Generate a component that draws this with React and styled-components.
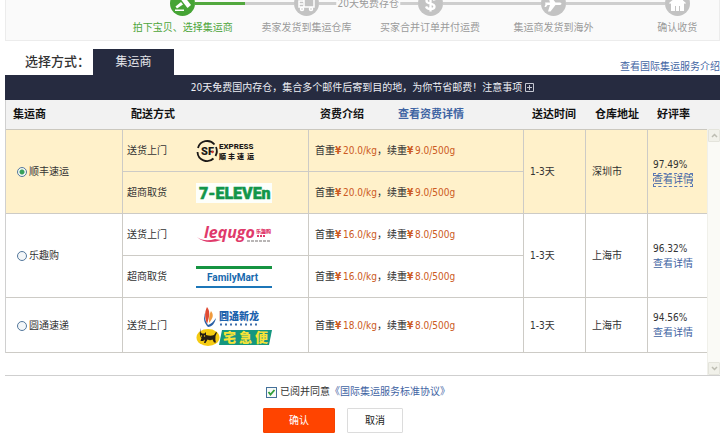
import React, { useState } from "react";
import styled, { createGlobalStyle, css } from "styled-components";

const GlobalStyle = createGlobalStyle`
  * { box-sizing: border-box; }
  body {
    margin: 0;
    background: #fff;
    color: #333;
    font: 10px/14px "DejaVu Sans Condensed", "Open Sans", "Noto Sans CJK SC", sans-serif;
  }
  button, input { font: inherit; margin: 0; }
`;

const Page = styled.main`
  padding-left: 5px;
`;

const StepsPanel = styled.section`
  display: flex;
  flex-direction: column;
  justify-content: flex-end;
  height: 41px;
  overflow: hidden;
  background: #fafafa;
  border: 1px solid #ececec;
  border-top: 0;
`;

const Steps = styled.ol`
  display: grid;
  grid-template-columns: repeat(5, 1fr);
  list-style: none;
  margin: 0 -20px 0 115px;
  padding: 0;
`;

const Step = styled.li`
  position: relative;
  color: ${(p) => (p.$active ? "#4da53a" : "#9b9b9b")};
`;

const StepTrack = styled.div`
  display: flex;
  align-items: center;
`;

const Line = styled.span`
  flex: 1;
  height: 3px;
  background: ${(p) => p.$color};
`;

const StepIcon = styled.svg`
  width: 25px;
  height: 25px;
  flex: none;
`;

const StepLabel = styled.div`
  line-height: 24px;
  text-align: center;
  white-space: nowrap;
`;

const TrackNote = styled.span`
  position: absolute;
  top: 6px;
  left: 100%;
  z-index: 1;
  transform: translateX(-50%);
  padding: 0 1px;
  white-space: nowrap;
  background: #fafafa;
`;

const TabBar = styled.div`
  display: flex;
  align-items: flex-end;
  height: 34px;
  padding-left: 20px;
`;

const TabTitle = styled.h1`
  width: 68px;
  margin: 0;
  font-size: 13px;
  font-weight: 500;
  line-height: 27px;
  white-space: nowrap;
  color: #333;
`;

const Tab = styled.button`
  width: 81px;
  height: 26px;
  padding: 0;
  border: 0;
  font-size: 12px;
  color: #e6e7ec;
  background: #262b40;
`;

const Link = styled.a`
  display: inline-block;
  color: #3f64a3;
  text-decoration: none;
  ${(p) =>
    p.$outlined &&
    css`
      outline: 1px dashed #5b78b4;
      outline-offset: -1px;
    `}
`;

const TabLink = styled(Link)`
  margin-left: auto;
  line-height: 16px;
`;

const Banner = styled.p`
  display: flex;
  align-items: center;
  justify-content: center;
  gap: 3px;
  height: 25px;
  margin: 0;
  color: #eceef4;
  background: #262b40;
`;

const Expand = styled.button`
  display: flex;
  padding: 0;
  border: 0;
  background: none;
`;

const ListPanel = styled.div`
  display: flex;
  border-bottom: 1px solid #cfcfcf;
`;

const TableArea = styled.div`
  flex: 1;
  padding-bottom: 22px;
`;

const Table = styled.table`
  width: 100%;
  table-layout: fixed;
  border-collapse: separate;
  border-spacing: 0;
  border-left: 1px solid #d0d0d0;
`;

const Col = styled.col`
  width: ${(p) => p.$w};
`;

const HeadCell = styled.th`
  height: 30px;
  padding: 0 0 0 ${(p) => p.$indent}px;
  font-size: 11px;
  font-weight: 700;
  text-align: left;
  white-space: nowrap;
  color: #111;
  background: #f2f2f2;
  border-bottom: 1px solid #cbc8bf;
`;

const HeadLink = styled(Link)`
  margin-left: 34px;
`;

const Row = styled.tr`
  background: ${(p) => (p.$selected ? "#fff1ca" : "#fff")};
`;

const Cell = styled.td`
  height: ${(p) => (p.$tall ? 55 : 42)}px;
  padding: 1px 0 0 ${(p) => p.$indent}px;
  border-bottom: 1px solid #cdcbc6;
  border-right: ${(p) => (p.$last ? "0" : "1px solid #cdcbc6")};
  white-space: nowrap;
`;

const Delivery = styled.div`
  display: grid;
  grid-template-columns: 69px auto;
  align-items: center;
`;

const Logo = styled.svg`
  display: block;
  width: 76px;
  height: ${(p) => p.$h}px;
`;

const Carrier = styled.label`
  display: flex;
  align-items: center;
  gap: 2px;
`;

const Radio = styled.input`
  appearance: none;
  width: 10px;
  height: 10px;
  border: 1px solid #54789c;
  border-radius: 50%;
  background: #f3f6f8;
  &:checked {
    background: radial-gradient(circle, #36a05a 0 2px, #f3f8f4 3px);
  }
`;

const Price = styled.span`
  color: #cc5a22;
`;

const Yen = styled.b`
  display: inline-block;
  width: 8px;
`;

const Rating = styled.div`
  display: flex;
  flex-direction: column;
  align-items: flex-start;
  gap: 1px;
`;

const ScrollColumn = styled.div`
  display: flex;
  flex-direction: column;
  width: 13px;
`;

const ScrollHead = styled.div`
  height: 29px;
  background: #f2f2f2;
`;

const ScrollTrack = styled.div`
  display: flex;
  flex: 1;
  flex-direction: column;
  justify-content: space-between;
  background: #fafaf6;
  border-left: 1px solid #f0f0ea;
`;

const ScrollButton = styled.button`
  display: flex;
  align-items: center;
  justify-content: center;
  height: 13px;
  padding: 0;
  border: 1px solid #e4e4dc;
  border-radius: 1px;
  background: #f1f1ea;
`;

const Footer = styled.form`
  padding: 9px 0 0 258px;
`;

const Agreement = styled.div`
  display: flex;
  align-items: center;
  height: 14px;
  padding-left: 3px;
`;

const AgreeLabel = styled.label`
  display: flex;
  align-items: center;
  gap: 3px;
`;

const CheckWrap = styled.span`
  display: grid;
  > * { grid-area: 1 / 1; }
`;

const Check = styled.input`
  appearance: none;
  width: 11px;
  height: 11px;
  border: 1px solid #44709a;
  background: #f7faf7;
`;

const CheckMark = styled.svg`
  width: 11px;
  height: 11px;
  pointer-events: none;
`;

const Actions = styled.div`
  display: flex;
  gap: 12px;
  margin-top: 9px;
`;

const Button = styled.button`
  width: ${(p) => (p.$primary ? 72 : 56)}px;
  height: 25px;
  padding: 0;
  border: 1px solid ${(p) => (p.$primary ? "#f64300" : "#dcdcdc")};
  border-radius: 1px;
  color: ${(p) => (p.$primary ? "#fff" : "#222")};
  background: ${(p) => (p.$primary ? "#ff4400" : "#fff")};
`;

const stepArt = {
  gavel: (
    <g fill="#fff">
      <path d="M9 6l3.500-3L21 14l-3.500 3z" />
      <path d="M11 11l2 2.500-6 4-1.500-2z" />
      <path d="M5 18.500h9V20H5z" />
    </g>
  ),
  truck: (
    <g fill="none" stroke="#fff" strokeWidth="1.5">
      <path d="M10 6h10v10H10z M5 10h5v6H5z M5 13h4" />
      <circle cx="8" cy="18" r="1.5" fill="#c3c3c3" />
      <circle cx="17" cy="18" r="1.5" fill="#c3c3c3" />
    </g>
  ),
  dollar: (
    <path
      d="M16.500 9.500C15.500 6.500 8.500 6.500 8.500 10c0 3.500 8 1.800 8 5.500 0 3.500-7 3.500-8.500 0M12.500 4.500v16"
      fill="none"
      stroke="#fff"
      strokeWidth="2.300"
    />
  ),
  plane: (
    <path
      d="M4 11.500h5L7 5h2.500l5 6.500H19q3 1.200 0 2.500h-4.500l-5 6.500H7L9 14H6.500L5 16H3.500l1-3z"
      fill="#fff"
    />
  ),
  home: (
    <path
      d="M4 12l8.500-7 3.500 2.800V6h2v3.500l3 2.500-1 1-1-.800V20h-4v-5h-1v5h-3v-5H10v5H6v-7.800l-1 .800z"
      fill="#fff"
    />
  ),
};

const steps = [
  { label: "拍下宝贝、选择集运商", art: "gavel", left: "transparent", right: "#52a83e" },
  { label: "卖家发货到集运仓库", art: "truck", left: "#cecece", right: "#cecece", note: "20天免费存仓" },
  { label: "买家合并订单并付运费", art: "dollar", left: "#cecece", right: "#cecece" },
  { label: "集运商发货到海外", art: "plane", left: "#cecece", right: "#cecece" },
  { label: "确认收货", art: "home", left: "#cecece", right: "transparent" },
];

const CJK = '"Noto Sans CJK SC", sans-serif';

function SfLogo() {
  return (
    <Logo $h={26} viewBox="0 0 76 26" role="img" aria-label="SF Express">
      <path d="M18.500 6.500A9.500 9.500 0 0 0 2 10M1.500 14A9.500 9.500 0 0 0 17.500 20.500M20 9A10 10 0 0 1 19.500 18" fill="none" stroke="#1c1917" strokeWidth="1.800" />
      <text x="5" y="17" fontFamily="Roboto" fontWeight="900" fontSize="11" fill="#1c1917">SF</text>
      <circle cx="16.500" cy="14" r="1.200" fill="#d8342c" />
      <text x="23" y="11" fontFamily="Roboto" fontWeight="800" fontSize="8" fill="#1c1917">EXPRESS</text>
      <g fontFamily={CJK} fontWeight="900" fontSize="7" fill="#1c1917">
        <text x="23" y="21">顺</text>
        <text x="32" y="21">丰</text>
        <text x="41" y="21">速</text>
        <text x="51" y="21">运</text>
      </g>
    </Logo>
  );
}

function SevenLogo() {
  return (
    <Logo $h={20} viewBox="0 0 76 20" role="img" aria-label="7-Eleven">
      <rect width="76" height="20" fill="#fdfffb" />
      <text x="3" y="16" fontFamily="Roboto" fontWeight="900" fontSize="16" fill="#13964a" stroke="#13964a" strokeWidth="0.500">7-ELEVEn</text>
    </Logo>
  );
}

function LequgoLogo() {
  return (
    <Logo $h={30} viewBox="0 0 76 30" role="img" aria-label="Lequgo">
      <text x="8" y="18" fontFamily="Open Sans" fontWeight="700" fontStyle="italic" fontSize="16" fill="#e03a6b">lequgo</text>
      <path d="M1 17c5 4 12 4 18 2l6 1c-8 3-18 3-24-3z" fill="#e03a6b" />
      <text x="60" y="13" fontFamily={CJK} fontWeight="900" fontSize="5" fill="#e03a6b">乐趣购</text>
      <path d="M61 16h8" stroke="#e03a6b" strokeWidth="2" strokeDasharray="2 1" />
      <path d="M51 21h24" stroke="#b9b6b6" strokeWidth="2" strokeDasharray="3 1" />
    </Logo>
  );
}

function FamilyLogo() {
  return (
    <Logo $h={22} viewBox="0 0 76 22" role="img" aria-label="FamilyMart">
      <rect width="76" height="22" fill="#fff" />
      <rect width="76" height="3" fill="#169441" />
      <rect y="20" width="76" height="2" fill="#1c76b8" />
      <text x="11" y="15" fontFamily="Roboto" fontWeight="700" fontSize="10" fill="#1769ae">FamilyMart</text>
    </Logo>
  );
}

function YtoLogo() {
  return (
    <Logo $h={42} viewBox="0 0 76 42" role="img" aria-label="圆通新龙 宅急便">
      <path d="M11 2c3 4 3 8 0 17c-2-5-3-11 0-17z" fill="#df4b34" />
      <path d="M15 6c3 4 2 7-2 12c0-5 0-8 2-12z" fill="#f09a3d" />
      <path d="M9 8c-1 4 0 8 3 12c3-1 5-3 8-7c-1 5-4 9-8 9c-4-4-5-9-3-14z" fill="#2a5fa5" />
      <text x="23" y="15" fontFamily={CJK} fontWeight="900" fontSize="10" fill="#1d62ad">圆通新龙</text>
      <path d="M24 19.500h39" stroke="#3d6fac" strokeWidth="2" strokeDasharray="2 3" />
      <ellipse cx="12" cy="32.500" rx="11.500" ry="8.500" fill="#f5cb12" />
      <path d="M4.500 27l1.500 1.500h2.500L10 27v3c3 1 6 1 8 0l2-3l1 .500l-1.500 3.500c0 3-.500 4 .500 6.500h-2l-1.500-3c-2 1-3 1-5 0l-2 3.500H8l1-3.500l-2 1.500H4.500l1-3c-2-2-2-5-1-10z" fill="#251d14" />
      <circle cx="5.500" cy="31" r="0.700" fill="#f5cb12" />
      <circle cx="8.500" cy="31" r="0.700" fill="#f5cb12" />
      <path d="M26 25h50l-3 15H23z" fill="#14967f" />
      <g fontFamily={CJK} fontWeight="900" fontSize="13" fill="#f7e338">
        <text x="27" y="37">宅</text>
        <text x="43" y="37">急</text>
        <text x="59" y="37">便</text>
      </g>
    </Logo>
  );
}

const carriers = [
  {
    name: "顺丰速运", time: "1-3天", city: "深圳市", rate: "97.49%",
    options: [
      { way: "送货上门", LogoArt: SfLogo, first: "20.0/kg", next: "9.0/500g" },
      { way: "超商取货", LogoArt: SevenLogo, first: "20.0/kg", next: "9.0/500g" },
    ],
  },
  {
    name: "乐趣购", time: "1-3天", city: "上海市", rate: "96.32%",
    options: [
      { way: "送货上门", LogoArt: LequgoLogo, first: "16.0/kg", next: "8.0/500g" },
      { way: "超商取货", LogoArt: FamilyLogo, first: "16.0/kg", next: "8.0/500g" },
    ],
  },
  {
    name: "圆通速递", time: "1-3天", city: "上海市", rate: "94.56%",
    options: [{ way: "送货上门", LogoArt: YtoLogo, first: "18.0/kg", next: "8.0/500g" }],
  },
];

function CarrierRows({ carrier, selected, onSelect }) {
  const span = carrier.options.length;
  const tall = span === 1;
  return carrier.options.map(({ way, LogoArt, first, next }, i) => (
    <Row key={way} $selected={selected}>
      {i === 0 && (
        <Cell rowSpan={span} $indent={11} $tall={tall}>
          <Carrier>
            <Radio type="radio" name="carrier" checked={selected} onChange={onSelect} />
            {carrier.name}
          </Carrier>
        </Cell>
      )}
      <Cell $indent={4} $tall={tall}>
        <Delivery>
          {way}
          <LogoArt />
        </Delivery>
      </Cell>
      <Cell $indent={6} $tall={tall}>
        首重<Price><Yen>¥</Yen>{first}</Price>，续重<Price><Yen>¥</Yen>{next}</Price>
      </Cell>
      {i === 0 && (
        <>
          <Cell rowSpan={span} $indent={6} $tall={tall}>{carrier.time}</Cell>
          <Cell rowSpan={span} $indent={6} $tall={tall}>{carrier.city}</Cell>
          <Cell rowSpan={span} $indent={5} $tall={tall} $last>
            <Rating>
              {carrier.rate}
              <Link href="#detail" $outlined={selected}>查看详情</Link>
            </Rating>
          </Cell>
        </>
      )}
    </Row>
  ));
}

function Chevron({ down }) {
  return (
    <svg width="7" height="5" viewBox="0 0 7 5" aria-hidden="true">
      <path d={down ? "M1 1l2.500 2.500L6 1" : "M1 4l2.500-2.500L6 4"} fill="none" stroke="#bdbdb2" strokeWidth="1.500" />
    </svg>
  );
}

export default function App() {
  const [selected, setSelected] = useState(0);
  const [agreed, setAgreed] = useState(true);
  return (
    <Page lang="zh-CN">
      <GlobalStyle />
      <StepsPanel>
        <Steps>
          {steps.map((s, i) => (
            <Step key={s.label} $active={i === 0}>
              <StepTrack>
                <Line $color={s.left} />
                <StepIcon viewBox="0 0 25 25" aria-hidden="true">
                  <circle cx="12.500" cy="12.500" r="12.500" fill={i === 0 ? "#46a435" : "#c3c3c3"} />
                  {stepArt[s.art]}
                </StepIcon>
                <Line $color={s.right} />
              </StepTrack>
              {s.note && <TrackNote>{s.note}</TrackNote>}
              <StepLabel>{s.label}</StepLabel>
            </Step>
          ))}
        </Steps>
      </StepsPanel>

      <TabBar>
        <TabTitle>选择方式：</TabTitle>
        <Tab type="button">集运商</Tab>
        <TabLink href="#intro">查看国际集运服务介绍</TabLink>
      </TabBar>
      <Banner>
        20天免费国内存仓，集合多个邮件后寄到目的地，为你节省邮费！注意事项
        <Expand type="button" aria-label="展开">
          <svg width="9" height="9" viewBox="0 0 9 9" aria-hidden="true">
            <path d="M.500.500h8v8h-8zM2 4.500h5M4.500 2v5" fill="none" stroke="#c5c8d2" />
          </svg>
        </Expand>
      </Banner>

      <ListPanel>
        <TableArea>
          <Table>
            <colgroup>
              <Col $w="117px" />
              <Col $w="186px" />
              <Col $w="auto" />
              <Col $w="62px" />
              <Col $w="62px" />
              <Col $w="59px" />
            </colgroup>
            <thead>
              <tr>
                <HeadCell $indent={7}>集运商</HeadCell>
                <HeadCell $indent={8}>配送方式</HeadCell>
                <HeadCell $indent={11}>
                  资费介绍<HeadLink href="#fees">查看资费详情</HeadLink>
                </HeadCell>
                <HeadCell $indent={8}>送达时间</HeadCell>
                <HeadCell $indent={9}>仓库地址</HeadCell>
                <HeadCell $indent={9}>好评率</HeadCell>
              </tr>
            </thead>
            <tbody>
              {carriers.map((c, i) => (
                <CarrierRows key={c.name} carrier={c} selected={selected === i} onSelect={() => setSelected(i)} />
              ))}
            </tbody>
          </Table>
        </TableArea>
        <ScrollColumn>
          <ScrollHead />
          <ScrollTrack>
            <ScrollButton type="button" aria-label="向上"><Chevron /></ScrollButton>
            <ScrollButton type="button" aria-label="向下"><Chevron down /></ScrollButton>
          </ScrollTrack>
        </ScrollColumn>
      </ListPanel>

      <Footer onSubmit={(e) => e.preventDefault()}>
        <Agreement>
          <AgreeLabel>
            <CheckWrap>
              <Check type="checkbox" checked={agreed} onChange={(e) => setAgreed(e.target.checked)} />
              {agreed && (
                <CheckMark viewBox="0 0 11 11" aria-hidden="true">
                  <path d="M2.500 5l2 2.500L8.500 3" fill="none" stroke="#2f9e38" strokeWidth="1.800" />
                </CheckMark>
              )}
            </CheckWrap>
            已阅并同意
          </AgreeLabel>
          <Link href="#agreement">《国际集运服务标准协议》</Link>
        </Agreement>
        <Actions>
          <Button type="submit" $primary>确认</Button>
          <Button type="button">取消</Button>
        </Actions>
      </Footer>
    </Page>
  );
}
